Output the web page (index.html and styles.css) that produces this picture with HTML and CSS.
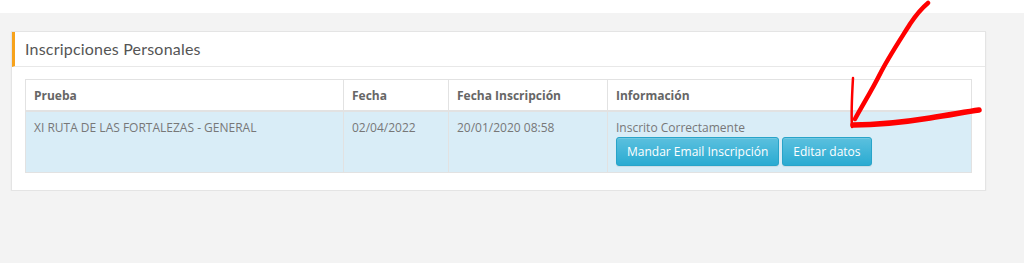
FILE: index.html
```html
<!DOCTYPE html>
<html lang="es">
<head>
<meta charset="UTF-8">
<meta name="viewport" content="width=device-width, initial-scale=1.0">
<title>Inscripciones Personales</title>
<link rel="stylesheet" href="styles.css">
</head>
<body>

<div class="topbar"></div>

<div class="main">
    <div class="panel">
        <div class="panel-heading">Inscripciones Personales</div>
        <div class="panel-body">
            <table class="tabla">
                <thead>
                    <tr>
                        <th class="col-prueba">Prueba</th>
                        <th class="col-fecha">Fecha</th>
                        <th class="col-insc">Fecha Inscripción</th>
                        <th>Información</th>
                    </tr>
                </thead>
                <tbody>
                    <tr class="info">
                        <td>XI RUTA DE LAS FORTALEZAS - GENERAL</td>
                        <td>02/04/2022</td>
                        <td>20/01/2020 08:58</td>
                        <td>
                            <div class="estado">Inscrito Correctamente</div>
                            <div class="acciones">
                                <button class="btn">Mandar Email Inscripción</button>
                                <button class="btn">Editar datos</button>
                            </div>
                        </td>
                    </tr>
                </tbody>
            </table>
        </div>
    </div>
</div>

<!-- flecha roja dibujada a mano encima de la captura -->
<svg class="flecha" width="1024" height="263" viewBox="0 0 1024 263">
    <path d="M928 3 C 922 8, 916 15, 910 24 C 900 40, 888 58, 880 74 C 872 90, 862 106, 855 119" fill="none" stroke="#f00" stroke-width="4.5" stroke-linecap="round"/>
    <path d="M853 78 C 852 95, 851 112, 852 127" fill="none" stroke="#f00" stroke-width="2.5" stroke-linecap="round"/>
    <path d="M853 125 C 875 125, 905 122, 930 118 C 950 115, 965 112, 979 110" fill="none" stroke="#f00" stroke-width="5.5" stroke-linecap="round"/>
</svg>

</body>
</html>
```

FILE: styles.css
```css
body {
    font-family: "Open Sans", Arial, sans-serif;
    margin: 0;
    padding: 0;
    background-color: #f3f3f3;
    color: #777;
    font-size: 12px;
}
.topbar {
    height: 13px;
    background-color: #fff;
}
.main {
    padding: 18px 38px 0 11px;
}
.panel {
    background-color: #fff;
    border: 1px solid #e4e4e4;
    box-shadow: 0 1px 1px rgba(0, 0, 0, 0.08);
}
.panel-heading {
    height: 34px;
    line-height: 34px;
    padding-left: 10px;
    border-left: 3px solid #f7a21b;
    border-bottom: 1px solid #e8e8e8;
    font-family: Lato, "Open Sans", sans-serif;
    font-size: 16px;
    letter-spacing: 0.2px;
    color: #555;
}
.panel-body {
    padding: 12px 13px 17px 13px;
}
.tabla {
    width: 100%;
    border-collapse: collapse;
    border: 1px solid #e2e2e2;
}
.tabla th, .tabla td {
    text-align: left;
    vertical-align: top;
    padding: 7px 7px 7px 8px;
    border-left: 1px solid #e2e2e2;
    line-height: 18px;
}
.tabla th {
    font-weight: bold;
    color: #666;
    padding-top: 7px;
    padding-bottom: 5px;
    border-bottom: 2px solid #e2e2e2;
}
.col-prueba { width: 302px; }
.col-fecha { width: 89px; }
.col-insc { width: 143px; }
.tabla tr.info td {
    background-color: #d9edf7;
    padding-top: 7px;
    padding-bottom: 6px;
}
.acciones {
    display: flex;
    gap: 3px;
}
.btn {
    font-family: "Open Sans", Arial, sans-serif;
    font-size: 12px;
    color: #fff;
    height: 29px;
    padding: 0 10px;
    border: 1px solid #28a4c9;
    border-radius: 3px;
    background-image: linear-gradient(to bottom, #5bc0de 0, #2aabd2 100%);
    box-shadow: inset 0 1px 0 rgba(255, 255, 255, 0.15), 0 1px 1px rgba(0, 0, 0, 0.075);
    cursor: pointer;
}
.flecha {
    position: absolute;
    left: 0;
    top: 0;
    pointer-events: none;
}
```
